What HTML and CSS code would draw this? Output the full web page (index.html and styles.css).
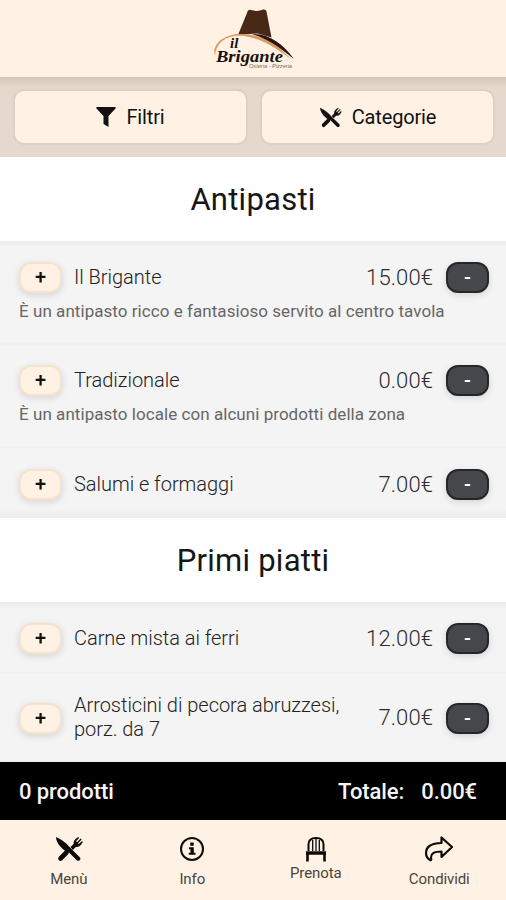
FILE: index.html
```
<!DOCTYPE html>
<html lang="it">
<head>
<meta charset="utf-8">
<title>Il Brigante</title>
<link rel="stylesheet" href="styles.css">
</head>
<body>
<svg class="defs" width="0" height="0">
  <symbol id="utensils" viewBox="0 0 28 26">
    <path d="M1 1C8 4 12 8 15.500 12L25 21.500q1 1.200 0 2.500t-3 .500L12 14.500q-1.500 1-3-.500C4 10 1 5 1 1Z"/>
    <path d="M11.500 16.500 5.500 22.500" stroke="currentColor" stroke-width="4.600" stroke-linecap="round"/>
    <path d="m15.500 11 3-3q-.500-3 2-5l2.700-2 .9.900L21 5.300l.9.900L25.700 2.500l.9.900L22.900 7.200l.9.900L27 5l.8.900-2 3q-2 2.500-5 2l-3 3Z"/>
  </symbol>
</svg>
<div class="app">
  <header class="header">
    <svg class="logo" viewBox="0 0 86 64" width="86" height="64">
      <path d="M28 27 37 5q1-4 4-3 7 2 12-.500 3-.500 3.500 2l5 26-14-4Z" fill="#482816"/>
      <path d="M5 48C1 36 15 25 33 26c22 1 35 12 48 25C67 41 54 31 34 28 17 26 6 34 5 48Z" fill="#dc995d"/>
      <path d="M42 26c17-1 31 10 42 25-13-10-23-19-42-25Z" fill="#2b1710"/>
      <text x="20" y="40" class="logo-name logo-il">il</text>
      <text x="6" y="53.500" class="logo-name" textLength="67" lengthAdjust="spacingAndGlyphs">Brigante</text>
      <text x="39" y="60" class="logo-sub" textLength="43" lengthAdjust="spacingAndGlyphs">Osteria - Pizzeria</text>
    </svg>
  </header>
  <div class="filters">
    <button class="filter"><svg class="funnel" viewBox="0 0 20 20" width="20" height="20"><path d="M.5 0h19q.5 1-.2 1.800L12.500 9v11L7.500 17V9L.7 1.800Q0 1 .5 0Z"/></svg>Filtri</button>
    <button class="filter"><svg class="cutlery" width="23" height="21"><use href="#utensils"/></svg>Categorie</button>
  </div>
  <main>
    <h2 class="title">Antipasti</h2>
    <section class="item tall">
      <div class="line"><button class="qty">+</button><span class="name">Il Brigante</span><span class="price">15.00€</span><button class="qty minus">-</button></div>
      <p class="desc">È un antipasto ricco e fantasioso servito al centro tavola</p>
    </section>
    <section class="item tall second">
      <div class="line"><button class="qty">+</button><span class="name">Tradizionale</span><span class="price">0.00€</span><button class="qty minus">-</button></div>
      <p class="desc">È un antipasto locale con alcuni prodotti della zona</p>
    </section>
    <section class="item last">
      <div class="line"><button class="qty">+</button><span class="name">Salumi e formaggi</span><span class="price">7.00€</span><button class="qty minus">-</button></div>
    </section>
    <h2 class="title">Primi piatti</h2>
    <section class="item">
      <div class="line"><button class="qty">+</button><span class="name">Carne mista ai ferri</span><span class="price">12.00€</span><button class="qty minus">-</button></div>
    </section>
    <section class="item">
      <div class="line"><button class="qty">+</button><span class="name">Arrosticini di pecora abruzzesi, porz. da 7</span><span class="price">7.00€</span><button class="qty minus">-</button></div>
    </section>
  </main>
  <div class="total"><span>0 prodotti</span><span class="sum">Totale:</span><span>0.00€</span></div>
  <nav class="nav">
    <a class="tab"><svg width="28" height="26"><use href="#utensils"/></svg>Menù</a>
    <a class="tab"><svg width="26" height="26" viewBox="0 0 26 26"><circle cx="13" cy="13" r="11" fill="none" stroke="currentColor" stroke-width="2"/><path d="M11.200 6.500h3.500v3.200h-3.500ZM10 11.200h4.800v5.600h1.700v2H9.800v-2h1.700v-3.600H10Z"/></svg>Info</a>
    <a class="tab short"><svg class="outline" width="24" height="26" viewBox="0 0 24 26"><path d="M4.500 15V8.500C4.500 4 7.500 2 12 2s7.500 2 7.500 6.500V15" stroke-width="2"/><path d="M8.700 15V4M12 15V2M15.300 15V4" stroke-width="1.300"/><path d="M2 17h20" stroke-width="3.500"/><path d="M3.500 18v7.500M20.500 18v7.500" stroke-width="2.600"/></svg>Prenota</a>
    <a class="tab"><svg class="outline" width="30" height="26" viewBox="0 0 30 26"><path d="M17.500 1.500v5.500C7 7 2 11 2 17c0 3.500 2 6 4.500 7.300 1-.3.800-1 .5-2C6.500 17.500 10 15.500 17.500 15.500v5.500L28 11Z" stroke-width="2.200" stroke-linejoin="round"/></svg>Condividi</a>
  </nav>
</div>
</body>
</html>
```
FILE: styles.css
```
* { box-sizing: border-box; }
body { margin: 0; font-family: Roboto, "Liberation Sans", sans-serif; background: #f4f4f4; color: #111; }
button { font: inherit; color: inherit; padding: 0; }
svg { display: block; flex: none; fill: currentColor; }
.outline { fill: none; stroke: currentColor; }
.defs { position: absolute; }
.app { width: 506px; height: 900px; display: flex; flex-direction: column; overflow: hidden; }
.header { height: 77px; flex: none; background: #fff2e4; padding: 8px 0 0 210px; }
.logo-name { font: italic bold 17px "Liberation Serif", serif; fill: #17110d; }
.logo-il { font-size: 15px; }
.logo-sub { font: italic 5.5px "Liberation Sans", sans-serif; fill: #77675c; }
.filters { height: 80px; flex: none; padding: 13px 12px 13px 14px; display: flex; gap: 14px; background: linear-gradient(#d3c6b8, #e5d9cd 10px); }
.filter { flex: 1; display: flex; align-items: center; justify-content: center; border: 1px solid #dfd0c1; border-radius: 10px; background: #fff2e4; font-size: 20px; letter-spacing: -.15px; box-shadow: 0 0 2px #cdbfb1; }
.funnel { margin-right: 10px; }
.cutlery { margin-right: 10px; }
main { flex: 1; min-height: 0; }
.title { margin: 0; height: 84px; display: flex; align-items: center; justify-content: center; background: #fff; font-size: 31px; font-weight: 400; letter-spacing: .25px; padding-top: 1px; color: #161616; }
.item { padding: 21px 17px 18px 19px; border-bottom: 2px solid #f0f0f0; }
.title + .item { background: linear-gradient(#ebebeb, #f4f4f4 6px); }
.item.tall { height: 104px; }
.item.second { height: 103px; padding-top: 20px; }
.item.last { height: 70px; padding-top: 21px; border: 0; background: linear-gradient(#f4f4f4 60px, #ededed); }
.line { display: flex; align-items: center; min-height: 31px; }
.qty { width: 43px; height: 31px; flex: none; border: 2px solid #f5e3d1; border-radius: 12px; background: #fff2e4; font-size: 20px; font-weight: 500; line-height: 25px; box-shadow: 0 2px 7px #0002; }
.minus { border-color: #24272a; background: #45474b; color: #fff; }
.name { width: 280px; margin: -1px 0 1px 12px; font-size: 20px; font-weight: 300; line-height: 24px; letter-spacing: -.03px; color: #222; }
.item:last-child .line { margin-top: -1px; }
.price { margin: -1px 13px 0 auto; font-size: 22px; font-weight: 300; letter-spacing: .1px; color: #2c2c2c; }
.desc { margin: 8px 0 0; font-size: 17px; line-height: 20px; letter-spacing: .05px; color: #666; white-space: nowrap; }
.total { height: 58px; flex: none; background: #000; color: #f5f5f5; display: flex; align-items: center; padding: 0 29px 0 19px; font-size: 22px; font-weight: 500; letter-spacing: -.08px; }
.sum { margin-left: auto; margin-right: 17px; }
.nav { height: 80px; flex: none; display: grid; grid-template-columns: repeat(4, 123.500px); padding-left: 7px; background: #fff2e4; }
.tab { display: flex; flex-direction: column; align-items: center; padding-top: 16px; font-size: 15px; line-height: 18px; letter-spacing: -.1px; color: #4b443e; }
.tab svg { color: #0c0a08; margin-bottom: 8px; }
.tab.short svg { margin-bottom: 2px; }
```
